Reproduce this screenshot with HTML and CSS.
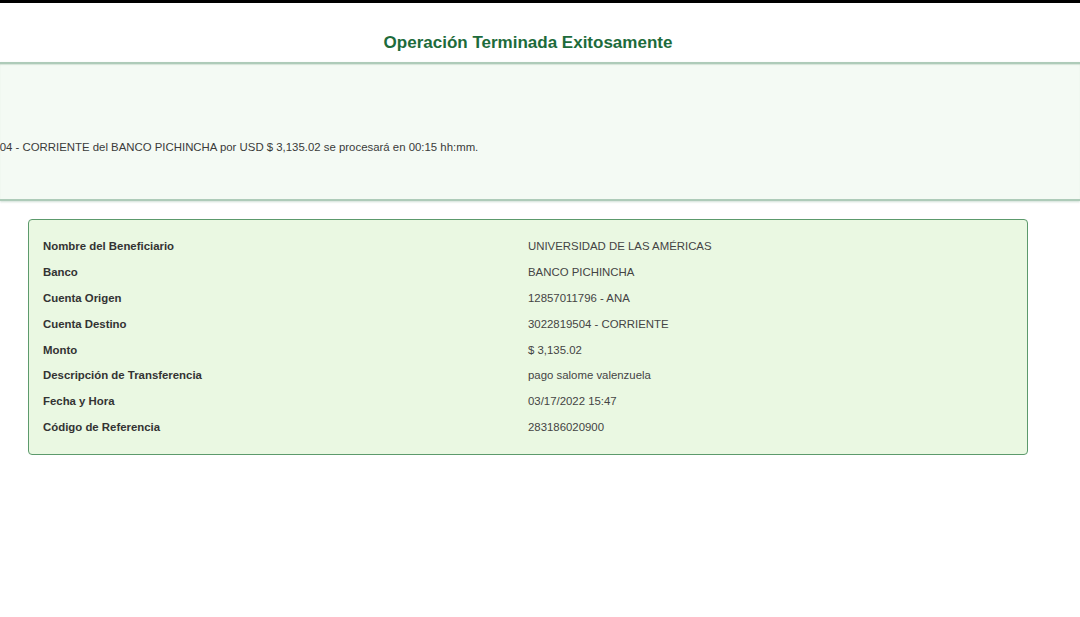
FILE: index.html
```html
<!DOCTYPE html>
<html lang="es">
<head>
    <meta charset="UTF-8">
    <meta name="viewport" content="width=device-width, initial-scale=1.0">
    <title>Operación Terminada Exitosamente</title>
    <link rel="stylesheet" href="styles.css">
</head>
<body>
    <div class="topbar"></div>

    <div class="page">
        <h1 class="page-title">Operación Terminada Exitosamente</h1>
    </div>

    <div class="notice">
        <p class="notice-text">3022819504 - CORRIENTE del BANCO PICHINCHA por USD $ 3,135.02 se procesará en 00:15 hh:mm.</p>
    </div>

    <div class="page">
        <div class="detail-card">
            <div class="detail-row">
                <span class="detail-label">Nombre del Beneficiario</span>
                <span class="detail-value">UNIVERSIDAD DE LAS AMÉRICAS</span>
            </div>
            <div class="detail-row">
                <span class="detail-label">Banco</span>
                <span class="detail-value">BANCO PICHINCHA</span>
            </div>
            <div class="detail-row">
                <span class="detail-label">Cuenta Origen</span>
                <span class="detail-value">12857011796 - ANA</span>
            </div>
            <div class="detail-row">
                <span class="detail-label">Cuenta Destino</span>
                <span class="detail-value">3022819504 - CORRIENTE</span>
            </div>
            <div class="detail-row">
                <span class="detail-label">Monto</span>
                <span class="detail-value">$ 3,135.02</span>
            </div>
            <div class="detail-row">
                <span class="detail-label">Descripción de Transferencia</span>
                <span class="detail-value">pago salome valenzuela</span>
            </div>
            <div class="detail-row">
                <span class="detail-label">Fecha y Hora</span>
                <span class="detail-value">03/17/2022 15:47</span>
            </div>
            <div class="detail-row">
                <span class="detail-label">Código de Referencia</span>
                <span class="detail-value">283186020900</span>
            </div>
        </div>
    </div>
</body>
</html>
```

FILE: styles.css
```css
* {
    margin: 0;
    padding: 0;
    box-sizing: border-box;
}

body {
    font-family: 'Liberation Sans', Arial, sans-serif;
    background: #fff;
    color: #333;
    overflow: hidden;
}

.topbar {
    height: 3px;
    background: #000;
}

.page {
    width: 1056px;
}

.page-title {
    text-align: center;
    font-size: 17px;
    line-height: 20px;
    font-weight: bold;
    color: #1d6b3b;
    padding-top: 30px;
    height: 59px;
}

.notice {
    height: 139px;
    background: #f4faf4;
    border-top: 2px solid #aecbb9;
    border-bottom: 2px solid #aecbb9;
    box-shadow: 0 1px 2px rgba(120, 160, 135, 0.35), inset 0 1px 1px rgba(120, 160, 135, 0.25);
    overflow: hidden;
    padding-top: 76px;
}

.notice-text {
    font-size: 11.4px;
    line-height: 14px;
    color: #3a3a3a;
    margin-left: -51px;
    white-space: nowrap;
}

.detail-card {
    margin: 18px 0 0 28px;
    width: 1000px;
    height: 236px;
    background: #eaf8e2;
    border: 1px solid #5c9a6c;
    border-radius: 4px;
    padding: 13.5px 14px 0;
}

.detail-row {
    display: grid;
    grid-template-columns: 485px 1fr;
    height: 25.8px;
    align-items: center;
    font-size: 11.4px;
}

.detail-label {
    font-weight: bold;
    color: #333;
}

.detail-value {
    color: #444;
}
```
